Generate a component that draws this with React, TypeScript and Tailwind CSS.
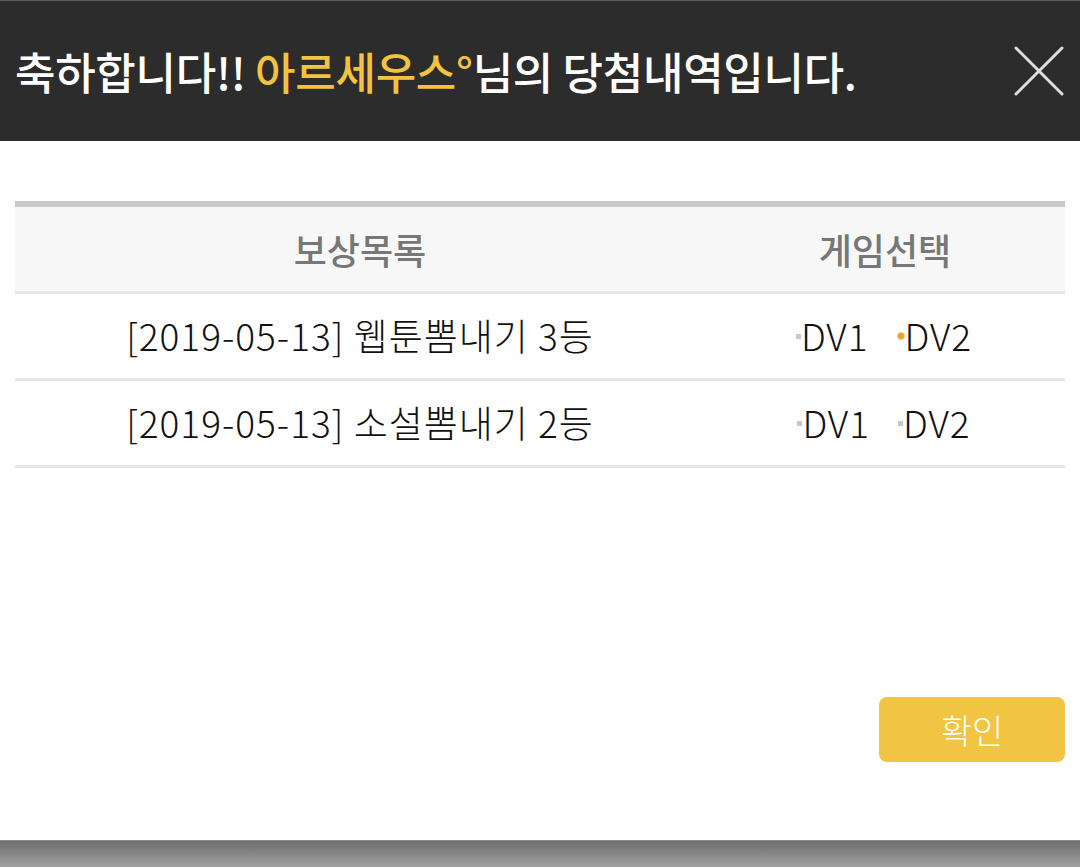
type Prize = {
  date: string
  title: string
  selected: "DV1" | "DV2" | null
}

const prizes: Prize[] = [
  { date: "2019-05-13", title: "웹툰뽐내기 3등", selected: "DV2" },
  { date: "2019-05-13", title: "소설뽐내기 2등", selected: null },
]

const font = { fontFamily: '"Noto Sans CJK KR", "Noto Sans", sans-serif' }

function Choice({ label, active }: { label: string; active: boolean }) {
  return (
    <span className="flex items-center">
      {active ? (
        <span className="w-[8px] h-[8px] rounded-full bg-[#e8a52e] border border-[#f5c86a]" />
      ) : (
        <span className="w-[5px] h-[5px] bg-[#c8c8c8]" />
      )}
      <span>{label}</span>
    </span>
  )
}

export default function App() {
  return (
    <div className="w-[1080px] h-[867px] flex flex-col bg-white" style={font}>
      {/* Header */}
      <div className="h-[141px] shrink-0 bg-[#2c2c2c] border-t border-[#5a5a5a] flex items-center justify-between pl-[15px] pr-[16px]">
        <h1 className="text-[44px] font-medium text-white tracking-[-0.3px] whitespace-nowrap">
          축하합니다!! <span className="text-[#f1c33f]">아르세우스°</span>님의 당첨내역입니다.
        </h1>
        <svg width="50" height="50" viewBox="0 0 50 50" className="text-[#dedede]">
          <path d="M2 2 L48 48 M48 2 L2 48" stroke="currentColor" strokeWidth="3" strokeLinecap="round" />
        </svg>
      </div>

      {/* Body */}
      <div className="flex-1 flex flex-col px-[15px] pt-[60px] pb-[78px]">
        <div className="border-t-[6px] border-[#c9c9c9]">
          <div className="grid grid-cols-[690px_1fr] h-[87px] bg-[#f7f7f7] border-b-[3px] border-[#e6e6e6] items-center text-[36px] font-medium text-[#777]">
            <div className="text-center">보상목록</div>
            <div className="text-center">게임선택</div>
          </div>
          {prizes.map((p, i) => (
            <div
              key={i}
              className="grid grid-cols-[690px_1fr] h-[87px] border-b-[3px] border-[#e6e6e6] items-center text-[37px] font-light tracking-[1px] text-[#111]"
            >
              <div className="text-center">
                [{p.date}] {p.title}
              </div>
              <div className="flex justify-center gap-[28px] pr-[2px]">
                <Choice label="DV1" active={p.selected === "DV1"} />
                <Choice label="DV2" active={p.selected === "DV2"} />
              </div>
            </div>
          ))}
        </div>

        <div className="flex-1" />
        <div className="flex justify-end">
          <button className="w-[186px] h-[65px] rounded-[8px] bg-[#f1c443] text-white text-[34px] font-light">
            확인
          </button>
        </div>
      </div>

      {/* bottom shade */}
      <div className="h-[27px] shrink-0 bg-gradient-to-b from-[#6f6f6f] to-[#a2a2a2] border-t border-[#8a8a8a]" />
    </div>
  )
}
